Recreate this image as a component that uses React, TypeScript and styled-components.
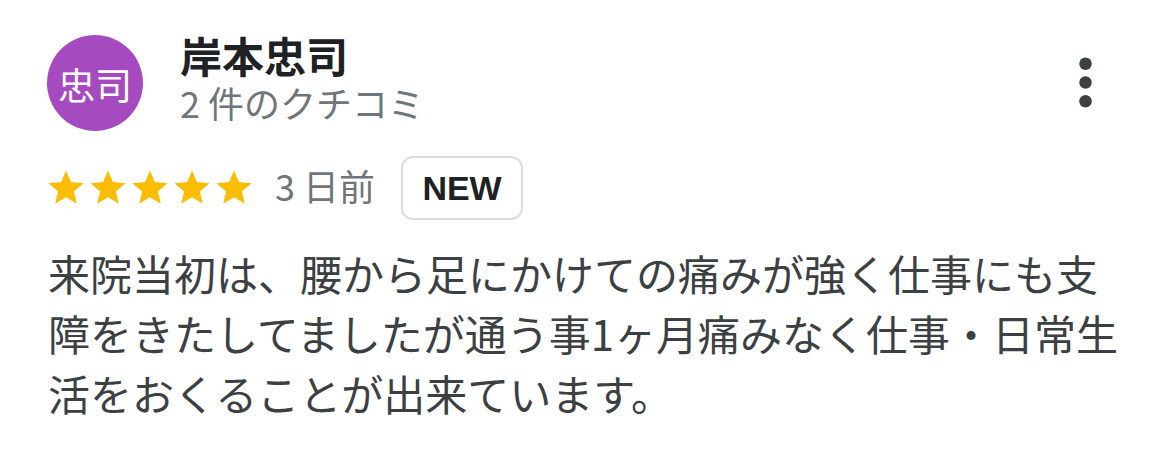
import React from "react";
import styled, { createGlobalStyle } from "styled-components";

const GlobalStyle = createGlobalStyle`
  html, body {
    margin: 0;
    padding: 0;
    background: #ffffff;
  }
  body {
    font-family: "Noto Sans CJK JP", "Noto Sans", sans-serif;
  }
`;

const Card = styled.div`
  box-sizing: border-box;
  width: 1170px;
  padding: 35px 32px 0 48px;
  display: flex;
  flex-direction: column;
`;

const Header = styled.div`
  display: flex;
  align-items: flex-start;
`;

const Avatar = styled.div`
  width: 96px;
  height: 96px;
  margin-left: -1px;
  border-radius: 50%;
  background: #a64ac0;
  color: #ffffff;
  display: flex;
  align-items: center;
  justify-content: center;
  font-size: 37px;
  line-height: 1;
  padding-top: 2px;
  box-sizing: border-box;
  flex-shrink: 0;
`;

const Info = styled.div`
  margin-left: 37px;
  display: flex;
  flex-direction: column;
  gap: 7px;
  flex: 1;
`;

const Name = styled.div`
  font-size: 42px;
  font-weight: 700;
  line-height: 40px;
  height: 40px;
  color: #202124;
`;

const Sub = styled.div`
  font-size: 36px;
  line-height: 40px;
  height: 40px;
  color: #70757a;
`;

const MenuButton = styled.div`
  width: 75px;
  height: 75px;
  margin-top: 10px;
  margin-right: 15px;
  color: #3c4043;
  flex-shrink: 0;
`;

const MetaRow = styled.div`
  margin-top: 25px;
  height: 64px;
  display: flex;
  align-items: center;
`;

const Stars = styled.div`
  display: flex;
  margin-left: -3px;
`;

const Star = styled.svg`
  width: 42px;
  height: 42px;
  display: block;
  fill: #fbbc04;
`;

const DateText = styled.span`
  margin-left: 20px;
  margin-bottom: 6px;
  font-size: 36px;
  line-height: 40px;
  color: #70757a;
`;

const Badge = styled.div`
  box-sizing: border-box;
  margin-left: 26px;
  height: 64px;
  width: 122px;
  border: 2px solid #dadce0;
  border-radius: 12px;
  display: flex;
  align-items: center;
  justify-content: center;
  font-family: "Liberation Sans", Arial, sans-serif;
  font-weight: 700;
  font-size: 34px;
  color: #202124;
`;

const Body = styled.p`
  margin: 23px 0 0 0;
  font-size: 42px;
  line-height: 60px;
  color: #3c4043;
`;

const StarIcon = () => (
  <Star viewBox="0 0 24 24">
    <path d="M12 17.27L18.18 21l-1.64-7.03L22 9.24l-7.19-.61L12 2 9.19 8.63 2 9.24l5.46 4.73L5.82 21z" />
  </Star>
);

export default function App() {
  return (
    <>
      <GlobalStyle />
      <Card>
        <Header>
          <Avatar>忠司</Avatar>
          <Info>
            <Name>岸本忠司</Name>
            <Sub>2 件のクチコミ</Sub>
          </Info>
          <MenuButton>
            <svg viewBox="0 0 24 24" width="75" height="75" fill="currentColor">
              <circle cx="12" cy="6" r="2" />
              <circle cx="12" cy="12" r="2" />
              <circle cx="12" cy="18" r="2" />
            </svg>
          </MenuButton>
        </Header>
        <MetaRow>
          <Stars>
            <StarIcon />
            <StarIcon />
            <StarIcon />
            <StarIcon />
            <StarIcon />
          </Stars>
          <DateText>3 日前</DateText>
          <Badge>NEW</Badge>
        </MetaRow>
        <Body>
          来院当初は、腰から足にかけての痛みが強く仕事にも支障をきたしてましたが通う事1ヶ月痛みなく仕事・日常生活をおくることが出来ています。
        </Body>
      </Card>
    </>
  );
}
